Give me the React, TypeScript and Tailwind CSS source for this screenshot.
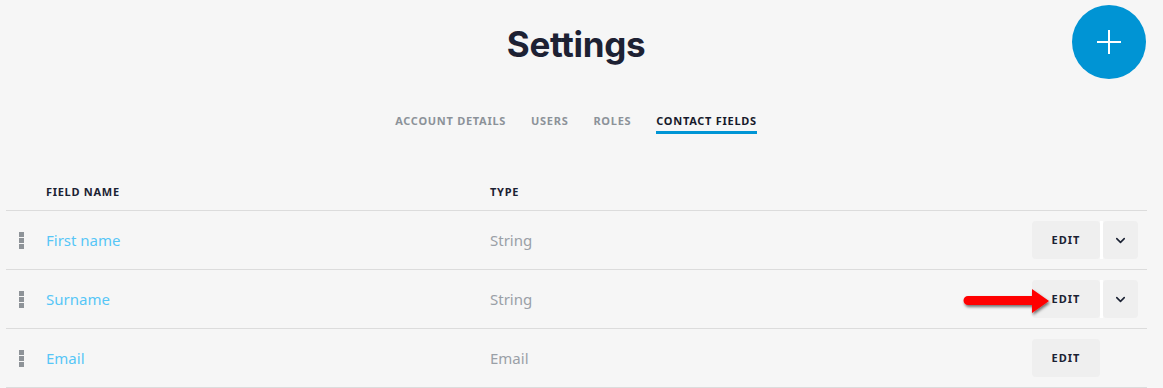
import { ChevronDown } from 'lucide-react'

const tabs = [
  { label: 'Account Details', active: false },
  { label: 'Users', active: false },
  { label: 'Roles', active: false },
  { label: 'Contact Fields', active: true },
]

const fields = [
  { name: 'First name', type: 'String', menu: true },
  { name: 'Surname', type: 'String', menu: true, arrow: true },
  { name: 'Email', type: 'Email', menu: false },
]

function DragHandle() {
  return (
    <div className="flex flex-col gap-[1px]">
      <span className="block w-[5px] h-[5px] bg-[#8e9398]" />
      <span className="block w-[5px] h-[5px] bg-[#8e9398]" />
      <span className="block w-[5px] h-[5px] bg-[#8e9398]" />
    </div>
  )
}

function RedArrow() {
  return (
    <svg
      className="absolute left-[948px] top-[15px] pointer-events-none"
      width="100"
      height="34"
      viewBox="0 0 100 34"
    >
      <defs>
        <filter id="arrowShadow" x="-10%" y="-30%" width="120%" height="170%">
          <feDropShadow dx="1" dy="2" stdDeviation="1.5" floodColor="#000" floodOpacity="0.55" />
        </filter>
      </defs>
      <path
        d="M14 11 L78 11 L78 4 L95 16 L78 28 L78 20 L14 20 A4.5 4.5 0 0 1 14 11 Z"
        fill="#ff0000"
        filter="url(#arrowShadow)"
      />
    </svg>
  )
}

export default function App() {
  return (
    <div
      className="relative w-full h-[388px] overflow-hidden bg-[#f6f6f6]"
      style={{ fontFamily: '"Noto Sans", "Open Sans", sans-serif' }}
    >
      <button className="absolute left-[1072px] top-[5px] w-[74px] h-[74px] rounded-full bg-[#0094d4] flex items-center justify-center">
        <svg width="24" height="24" viewBox="0 0 24 24">
          <rect x="0" y="11" width="24" height="2" fill="#fff" />
          <rect x="11" y="0" width="2" height="24" fill="#fff" />
        </svg>
      </button>

      <div className="w-[1152px]">
        <div className="h-[90px] flex items-center justify-center">
          <h1
            className="text-[35px] font-bold text-[#1d2133] tracking-[-0.01em] leading-none pb-[2px]"
            style={{ fontFamily: 'Inter, sans-serif' }}
          >
            Settings
          </h1>
        </div>

        <div className="h-[44px] flex items-end justify-center gap-[25px]">
          {tabs.map((tab) => (
            <div
              key={tab.label}
              className={`text-[11px] font-bold uppercase tracking-[0.065em] leading-[16px] pb-[2px] border-b-[3px] ${
                tab.active ? 'text-[#161a2b] border-[#0095d5]' : 'text-[#8c9299] border-transparent'
              }`}
            >
              {tab.label}
            </div>
          ))}
        </div>
      </div>

      <div className="ml-[6px] w-[1141px] mt-[36px]">
        <div className="h-[41px] flex items-end pb-[10px] border-b border-[#dcdcdc] text-[11px] font-bold uppercase tracking-[0.065em] leading-[16px] text-[#1b2233]">
          <div className="pl-[40px] w-[484px]">Field name</div>
          <div>Type</div>
        </div>

        {fields.map((f) => (
          <div key={f.name} className="relative h-[59px] flex items-center border-b border-[#dcdcdc]">
            <div className="w-[40px] pl-[13px] pt-[1px]">
              <DragHandle />
            </div>
            <div className="w-[444px] text-[15px] text-[#56c6f6]">{f.name}</div>
            <div className="flex-1 text-[15px] text-[#9aa0a7]">{f.type}</div>
            <div className="flex items-center mr-[9px]">
              <button className="w-[68px] h-[38px] bg-[#efefef] rounded-[4px] text-[11px] font-bold tracking-[0.09em] text-[#1b2233]">
                EDIT
              </button>
              {f.menu ? (
                <>
                  <div className="w-[3px] h-[38px] bg-white" />
                  <button className="w-[35px] h-[38px] bg-[#efefef] rounded-[4px] flex items-center justify-center">
                    <ChevronDown size={15} strokeWidth={2.5} className="text-[#1b2233]" />
                  </button>
                </>
              ) : (
                <div className="w-[38px] h-[38px]" />
              )}
            </div>
            {f.arrow && <RedArrow />}
          </div>
        ))}
      </div>
    </div>
  )
}
